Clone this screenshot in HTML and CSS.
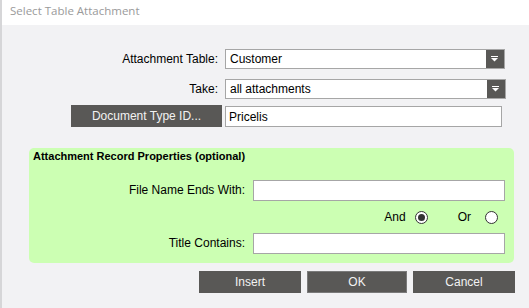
FILE: index.html
```html
<!DOCTYPE html>
<html lang="en">
<head>
    <meta charset="UTF-8">
    <title>Select Table Attachment</title>
    <link rel="stylesheet" href="styles.css">
</head>
<body>
    <div class="window">
        <div class="titlebar">Select Table Attachment</div>

        <div class="content">
            <div class="fields">
                <label class="lbl">Attachment Table:</label>
                <div class="select">
                    <span class="value">Customer</span>
                    <span class="arrow"><svg width="8" height="6" viewBox="0 0 8 6"><rect x="0" y="0" width="7" height="1" fill="#fff"/><path d="M0 2 H7 L3.5 5.5 Z" fill="#fff"/></svg></span>
                </div>

                <label class="lbl">Take:</label>
                <div class="select wide">
                    <span class="value">all attachments</span>
                    <span class="arrow"><svg width="8" height="6" viewBox="0 0 8 6"><rect x="0" y="0" width="7" height="1" fill="#fff"/><path d="M0 2 H7 L3.5 5.5 Z" fill="#fff"/></svg></span>
                </div>

                <button class="btn doc-btn">Document Type ID...</button>
                <input class="text-input short" type="text" value="Pricelis">
            </div>

            <div class="panel">
                <div class="panel-title">Attachment Record Properties (optional)</div>
                <div class="panel-fields">
                    <label class="lbl">File Name Ends With:</label>
                    <input class="text-input" type="text">

                    <div></div>
                    <div class="radios">
                        <span class="radio-label">And</span>
                        <span class="radio checked"></span>
                        <span class="radio-label or">Or</span>
                        <span class="radio"></span>
                    </div>

                    <label class="lbl">Title Contains:</label>
                    <input class="text-input" type="text">
                </div>
            </div>

            <div class="actions">
                <button class="btn">Insert</button>
                <button class="btn ok">OK</button>
                <button class="btn">Cancel</button>
            </div>
        </div>
    </div>
</body>
</html>
```

FILE: styles.css
```css
body {
    margin: 0;
    padding: 0;
    background-color: #f2f2f4;
    font-family: 'Liberation Sans', Arial, sans-serif;
    font-size: 12px;
    color: #000;
}

.window {
    width: 527px;
    height: 308px;
    border-left: 2px solid #d6d6d8;
    background-color: #f2f2f4;
}

.titlebar {
    height: 25px;
    line-height: 21px;
    padding-left: 8px;
    background-color: #fff;
    color: #9a9a9a;
    font-family: 'Open Sans', 'Noto Sans', sans-serif;
    font-size: 11.5px;
}

.content {
    padding-top: 24px;
}

.fields {
    display: grid;
    grid-template-columns: 151px 280px;
    column-gap: 3px;
    row-gap: 10px;
    align-items: end;
    margin-left: 69px;
}

.fields > :nth-child(5),
.fields > :nth-child(6) {
    margin-top: -4px;
}

.lbl {
    text-align: right;
    padding-right: 4px;
    line-height: 20px;
}

.select {
    display: flex;
    height: 18px;
    border: 1px solid #a6a6a6;
    background-color: #fff;
}

.select.wide {
    width: 279px;
}

.select .value {
    flex: 1;
    padding-left: 4px;
    line-height: 18px;
}

.select .arrow {
    width: 18px;
    background-color: #595856;
    display: flex;
    align-items: center;
    justify-content: center;
}

.btn {
    height: 22px;
    border: none;
    background-color: #595856;
    color: #f2f2f2;
    font-family: 'Liberation Sans', Arial, sans-serif;
    font-size: 12px;
    padding: 0;
}

.doc-btn {
    width: 151px;
}

.text-input {
    box-sizing: border-box;
    height: 21px;
    border: 1px solid #a6a6a6;
    background-color: #fff;
    font-family: 'Liberation Sans', Arial, sans-serif;
    font-size: 12px;
    padding: 0 3px;
    margin: 0;
}

.text-input.short {
    width: 277px;
}

.panel {
    margin: 21px 0 0 27px;
    width: 485px;
    height: 115px;
    box-sizing: border-box;
    border-radius: 5px;
    background-color: #ccffb3;
    padding: 2px 0 0 4px;
}

.panel-title {
    font-weight: bold;
    font-size: 11px;
    line-height: 13px;
}

.panel-fields {
    display: grid;
    grid-template-columns: 220px 252px;
    row-gap: 10px;
    margin-top: 17px;
    align-items: center;
}

.panel-fields .lbl {
    padding-right: 8px;
    line-height: 21px;
}

.panel-fields .text-input {
    width: 252px;
}

.radios {
    display: flex;
    align-items: center;
    justify-content: flex-end;
    height: 12px;
    padding-right: 7px;
}

.radio-label {
    margin-right: 9px;
}

.radio-label.or {
    margin-left: 30px;
    margin-right: 14px;
}

.radio {
    box-sizing: border-box;
    width: 13px;
    height: 13px;
    border-radius: 50%;
    border: 1px solid #333;
    background-color: #fff;
    display: flex;
    align-items: center;
    justify-content: center;
}

.radio.checked::after {
    content: '';
    width: 7px;
    height: 7px;
    border-radius: 50%;
    background-color: #333;
}

.actions {
    display: flex;
    justify-content: flex-end;
    gap: 6px;
    margin-top: 8px;
    padding-right: 14px;
}

.actions .btn {
    width: 102px;
}

.actions .btn.ok {
    width: 100px;
    border: 1px solid #7a7a7a;
}
```
